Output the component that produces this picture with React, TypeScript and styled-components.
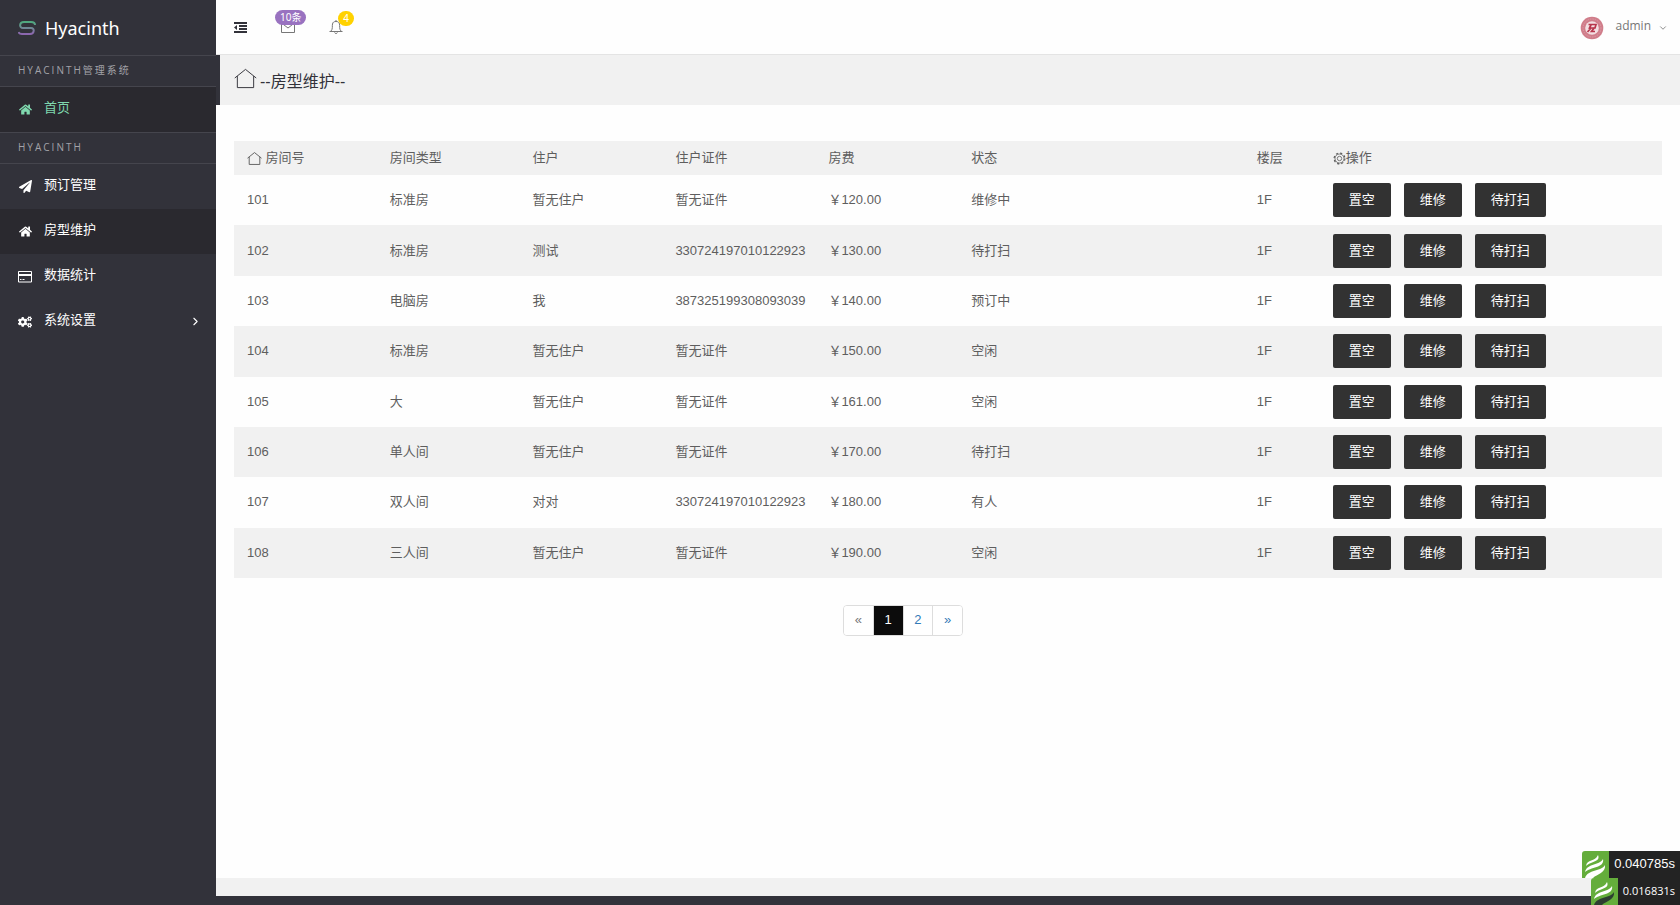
import React from 'react';
import styled, { createGlobalStyle } from 'styled-components';
import { FaHome, FaPaperPlane, FaCogs } from 'react-icons/fa';
import { ChevronDown, ChevronRight } from 'lucide-react';

const latin = '"Open Sans", "Noto Sans CJK SC", sans-serif';
const sans = '"Liberation Sans", "Noto Sans CJK SC", sans-serif';

const GlobalStyle = createGlobalStyle`
  * { box-sizing: border-box; }
  body { margin: 0; background: #32323a; color: #5e5e5e; font: 13px/18px ${sans}; }
  a { color: inherit; text-decoration: none; }
  button { font: inherit; cursor: pointer; }
  svg { display: block; flex: none; }
`;

const Shell = styled.div`
  display: flex;
  min-height: 100vh;
`;

const Sidebar = styled.aside`
  width: 216px;
  flex: none;
  background: #32323a;
  color: #fff;
`;

const Brand = styled.a`
  display: flex;
  align-items: center;
  gap: 9px;
  height: 55px;
  padding-left: 18px;
  color: #fff;
  font: 18px/24px "Noto Sans", sans-serif;
`;

const SectionLabel = styled.h2`
  margin: 0;
  height: 32px;
  padding-left: 18px;
  border: solid #45454d;
  border-width: 1px 0;
  color: #a2a2a8;
  font: 10px/28px ${latin};
  letter-spacing: 2px;
`;

const NavLink = styled.a<{ $dark?: boolean; $green?: boolean }>`
  display: flex;
  align-items: center;
  height: 45px;
  padding: 0 14px 0 18px;
  gap: 12px;
  background: ${(p) => (p.$dark ? '#2a292f' : 'transparent')};
  color: ${(p) => (p.$green ? '#7fd8ae' : '#fff')};
`;

const NavIcon = styled.span`
  display: flex;
  justify-content: center;
  width: 14px;
`;

const NavText = styled.span`
  flex: 1;
  padding-bottom: 4px;
`;

const Main = styled.div`
  display: flex;
  flex-direction: column;
  flex: 1;
  min-width: 0;
  margin-bottom: 9px;
  background: #fefefe;
`;

const TopBar = styled.header`
  display: flex;
  align-items: center;
  gap: 34px;
  height: 55px;
  padding: 0 12px 0 18px;
  border-bottom: 1px solid #e4e4e4;
  color: #32323a;
`;

const IconButton = styled.button`
  position: relative;
  display: flex;
  padding: 0;
  border: 0;
  background: none;
  color: #777;
`;

const MenuButton = styled(IconButton)`
  color: #32323a;
`;

const Badge = styled.span<{ $color: string; $left: number }>`
  position: absolute;
  bottom: 8px;
  left: ${(p) => p.$left}px;
  min-width: 16px;
  padding: 0 5px;
  border-radius: 8px;
  background: ${(p) => p.$color};
  color: #fff;
  font: 10px/15px "Noto Sans", "Noto Sans CJK SC", sans-serif;
  white-space: nowrap;
`;

const Account = styled.button`
  display: flex;
  align-items: center;
  gap: 7px;
  margin-left: auto;
  padding: 2px 0 0;
  border: 0;
  background: none;
  color: #777;
  font: 12px/18px ${latin};
`;

const AccountName = styled.span`
  margin: 0 0 4px 4px;
`;

const TitleBar = styled.div`
  display: flex;
  align-items: center;
  gap: 3px;
  height: 50px;
  padding-left: 14px;
  border-left: 4px solid #32323a;
  background: #f1f1f1;
  color: #32323a;
`;

const TitleIcon = styled.span`
  padding-bottom: 4px;
`;

const Title = styled.h1`
  margin: 0;
  padding-top: 4px;
  font: 16px/20px ${sans};
`;

const Content = styled.main`
  flex: 1;
  padding: 36px 18px 0;
`;

const Table = styled.table`
  width: 100%;
  height: 437px;
  table-layout: fixed;
  border-collapse: collapse;
`;

const HeadRow = styled.tr`
  height: 34px;
  background: #f1f1f1;
`;

const HeadCell = styled.th`
  padding: 0 13px;
  text-align: left;
  font-weight: 400;
  white-space: nowrap;
`;

const HeadLabel = styled.span`
  display: flex;
  align-items: center;
`;

const Row = styled.tr`
  &:nth-child(even) { background: #f1f1f1; }
`;

const Cell = styled.td`
  padding: 0 13px;
  white-space: nowrap;
`;

const Actions = styled.div`
  display: flex;
  gap: 13px;
`;

const ActionButton = styled.button`
  height: 34px;
  padding: 0 16px;
  border: 0;
  border-radius: 2px;
  background: #323232;
  color: #fff;
`;

const PagerRow = styled.div`
  display: flex;
  justify-content: center;
  margin-top: 27px;
  padding-right: 90px;
`;

const Pager = styled.nav`
  display: flex;
  width: 120px;
  border: 1px solid #ddd;
  border-radius: 4px;
  overflow: hidden;
`;

const PageLink = styled.a<{ $active?: boolean; $muted?: boolean }>`
  flex: 1;
  height: 29px;
  text-align: center;
  line-height: 27px;
  background: ${(p) => (p.$active ? '#0c0c0c' : '#fff')};
  color: ${(p) => (p.$active ? '#fff' : p.$muted ? '#777' : '#337ab7')};
  & + & { border-left: ${(p) => (p.$active ? '0' : '1px solid #ddd')}; }
`;

const Footer = styled.footer`
  height: 18px;
  background: #f1f1f1;
`;

const Trace = styled.div<{ $lower?: boolean }>`
  position: fixed;
  right: 0;
  bottom: ${(p) => (p.$lower ? '0' : '27px')};
  display: flex;
  height: 27px;
  color: #fff;
  font: ${(p) => (p.$lower ? `11px/26px ${latin}` : `13px/26px ${sans}`)};
`;

const TraceTime = styled.span`
  padding: 0 5px;
  background: #232323;
`;

const LogoMark = () => (
  <svg width="18" height="16" viewBox="0 0 18 16" fill="none" strokeWidth="2">
    <defs>
      <linearGradient id="mark" x1="0" y1="0" x2="0" y2="1">
        <stop offset="0" stopColor="#4fa97f" />
        <stop offset="0.45" stopColor="#6c8a92" />
        <stop offset="1" stopColor="#8d66b0" />
      </linearGradient>
    </defs>
    <path stroke="url(#mark)" d="M17 5C17 2.500 15 2 13 2H6C1 2 1 8 5 8h8c4 0 3.500 6-1 6H4c-2 0-3-.5-3.500-2" />
  </svg>
);

const HouseOutline = ({ size }: { size: number }) => (
  <svg width={size} height={size} viewBox="0 0 24 24" fill="none" stroke="currentColor" strokeWidth={size > 20 ? 1 : 1.5}>
    <path d="M.8 11.500 12 2.500l11.200 9M3.500 9.500v12h17v-12" />
  </svg>
);

const Outdent = () => (
  <svg width="13" height="11" viewBox="0 0 13 11" fill="currentColor">
    <path d="M0 0h13v2H0zM5 3h8v2H5zM5 6h8v2H5zM0 9h13v2H0zM3 3v5L0 5.500z" />
  </svg>
);

const Envelope = () => (
  <svg width="14" height="12" viewBox="0 0 14 12" fill="none" stroke="currentColor">
    <path d="M.5.5h13v11H.5zM.5 2 7 7l6.500-5" />
  </svg>
);

const Bell = () => (
  <svg width="14" height="14" viewBox="0 0 14 14" fill="none" stroke="currentColor">
    <path d="M.5 11.500h13M2 11c2-2 1-5 1.500-7C4 2 5 1.500 7 1.500S10 2 10.500 4c.5 2-.5 5 1.500 7M7 0v1.500M5.500 12.500c.5 1.300 2.500 1.300 3 0" />
  </svg>
);

const Card = () => (
  <svg width="14" height="12" viewBox="0 0 14 12" fill="none" stroke="currentColor">
    <path d="M.5.5h13v10.500H.5zM2 8.500h1.500M4.500 8.500h2" />
    <path d="M0 4h14" strokeWidth="2" />
  </svg>
);

const Gear = () => (
  <svg width="13" height="13" viewBox="0 0 13 13" fill="none" stroke="currentColor" strokeWidth=".8">
    <circle cx="6.500" cy="6.500" r="5.400" strokeWidth="1.200" strokeDasharray="2.200 2.040" />
    <circle cx="6.500" cy="6.500" r="4.500" />
    <circle cx="6.500" cy="6.500" r="2.200" />
  </svg>
);

const Avatar = () => (
  <svg width="24" height="24" viewBox="0 0 24 24">
    <circle cx="12" cy="12" r="11.300" fill="#d07d8a" />
    <circle cx="12" cy="12" r="9" fill="none" stroke="#dc9aa5" strokeDasharray="1.500 1" />
    <circle cx="12" cy="12" r="6.800" fill="#f3dfe2" />
    <path d="M8.500 8.500H16l-1 3.500h-4l-3.500 4M11 9l-2 4M14.500 11.500 11.500 15.500H15" fill="none" stroke="#b8364c" strokeWidth="1.700" />
  </svg>
);

const TraceLogo = ({ dark }: { dark?: boolean }) => (
  <svg width="27" height="27" viewBox="0 0 27 27">
    <path d="M3 0h24v27H0V3a3 3 0 0 1 3-3z" fill="#64ad3b" />
    <g fill="#fff">
      <path d="M4 15C5 8 13 11 16 4c3 7-7 6-12 11z" />
      <path d="M3 21C5 12 17 15 21 8c2 9-13 8-18 13z" />
    </g>
    <path fill={dark ? '#2c3e30' : '#fff'} d="M3 27c3-9 16-6 20-13 1 8-8 9-12 13z" />
  </svg>
);

const nav = [
  { icon: <FaPaperPlane size={13} />, label: '预订管理' },
  { icon: <FaHome size={13} />, label: '房型维护', dark: true },
  { icon: <Card />, label: '数据统计' },
  { icon: <FaCogs size={14} />, label: '系统设置', more: true },
];

const rooms = [
  ['101', '标准房', '暂无住户', '暂无证件', '￥120.00', '维修中', '1F'],
  ['102', '标准房', '测试', '330724197010122923', '￥130.00', '待打扫', '1F'],
  ['103', '电脑房', '我', '387325199308093039', '￥140.00', '预订中', '1F'],
  ['104', '标准房', '暂无住户', '暂无证件', '￥150.00', '空闲', '1F'],
  ['105', '大', '暂无住户', '暂无证件', '￥161.00', '空闲', '1F'],
  ['106', '单人间', '暂无住户', '暂无证件', '￥170.00', '待打扫', '1F'],
  ['107', '双人间', '对对', '330724197010122923', '￥180.00', '有人', '1F'],
  ['108', '三人间', '暂无住户', '暂无证件', '￥190.00', '空闲', '1F'],
];

const columns = ['10%', '10%', '10%', '153px', '10%', '20%', '76px', 'auto'];

const ColumnWidth = styled.col<{ $width: string }>`
  width: ${(p) => p.$width};
`;

export default function App() {
  return (
    <>
      <GlobalStyle />
      <Shell>
        <Sidebar>
          <Brand href="#"><LogoMark />Hyacinth</Brand>
          <SectionLabel>HYACINTH管理系统</SectionLabel>
          <NavLink href="#" $dark $green>
            <NavIcon><FaHome size={13} /></NavIcon>
            <NavText>首页</NavText>
          </NavLink>
          <SectionLabel>HYACINTH</SectionLabel>
          {nav.map((item) => (
            <NavLink href="#" key={item.label} $dark={item.dark}>
              <NavIcon>{item.icon}</NavIcon>
              <NavText>{item.label}</NavText>
              {item.more && <ChevronRight size={13} />}
            </NavLink>
          ))}
        </Sidebar>
        <Main>
          <TopBar>
            <MenuButton aria-label="Toggle menu"><Outdent /></MenuButton>
            <IconButton aria-label="Messages"><Envelope /><Badge $color="#9972c0" $left={-6}>10条</Badge></IconButton>
            <IconButton aria-label="Alerts"><Bell /><Badge $color="#ffd200" $left={9}>4</Badge></IconButton>
            <Account>
              <Avatar />
              <AccountName>admin</AccountName>
              <ChevronDown size={10} />
            </Account>
          </TopBar>
          <TitleBar><TitleIcon><HouseOutline size={23} /></TitleIcon><Title>--房型维护--</Title></TitleBar>
          <Content>
            <Table>
              <colgroup>
                {columns.map((width, i) => <ColumnWidth key={i} $width={width} />)}
              </colgroup>
              <thead>
                <HeadRow>
                  <HeadCell><HeadLabel><HouseOutline size={15} />&nbsp;房间号</HeadLabel></HeadCell>
                  {['房间类型', '住户', '住户证件', '房费', '状态', '楼层'].map((h) => <HeadCell key={h}>{h}</HeadCell>)}
                  <HeadCell><HeadLabel><Gear />操作</HeadLabel></HeadCell>
                </HeadRow>
              </thead>
              <tbody>
                {rooms.map((room) => (
                  <Row key={room[0]}>
                    {room.map((value, i) => <Cell key={i}>{value}</Cell>)}
                    <Cell>
                      <Actions>
                        <ActionButton>置空</ActionButton>
                        <ActionButton>维修</ActionButton>
                        <ActionButton>待打扫</ActionButton>
                      </Actions>
                    </Cell>
                  </Row>
                ))}
              </tbody>
            </Table>
            <PagerRow>
              <Pager aria-label="Pages">
                <PageLink href="#" $muted>«</PageLink>
                <PageLink href="#" $active>1</PageLink>
                <PageLink href="#">2</PageLink>
                <PageLink href="#">»</PageLink>
              </Pager>
            </PagerRow>
          </Content>
          <Footer />
        </Main>
      </Shell>
      <Trace><TraceLogo /><TraceTime>0.040785s</TraceTime></Trace>
      <Trace $lower><TraceLogo dark /><TraceTime>0.016831s</TraceTime></Trace>
    </>
  );
}
